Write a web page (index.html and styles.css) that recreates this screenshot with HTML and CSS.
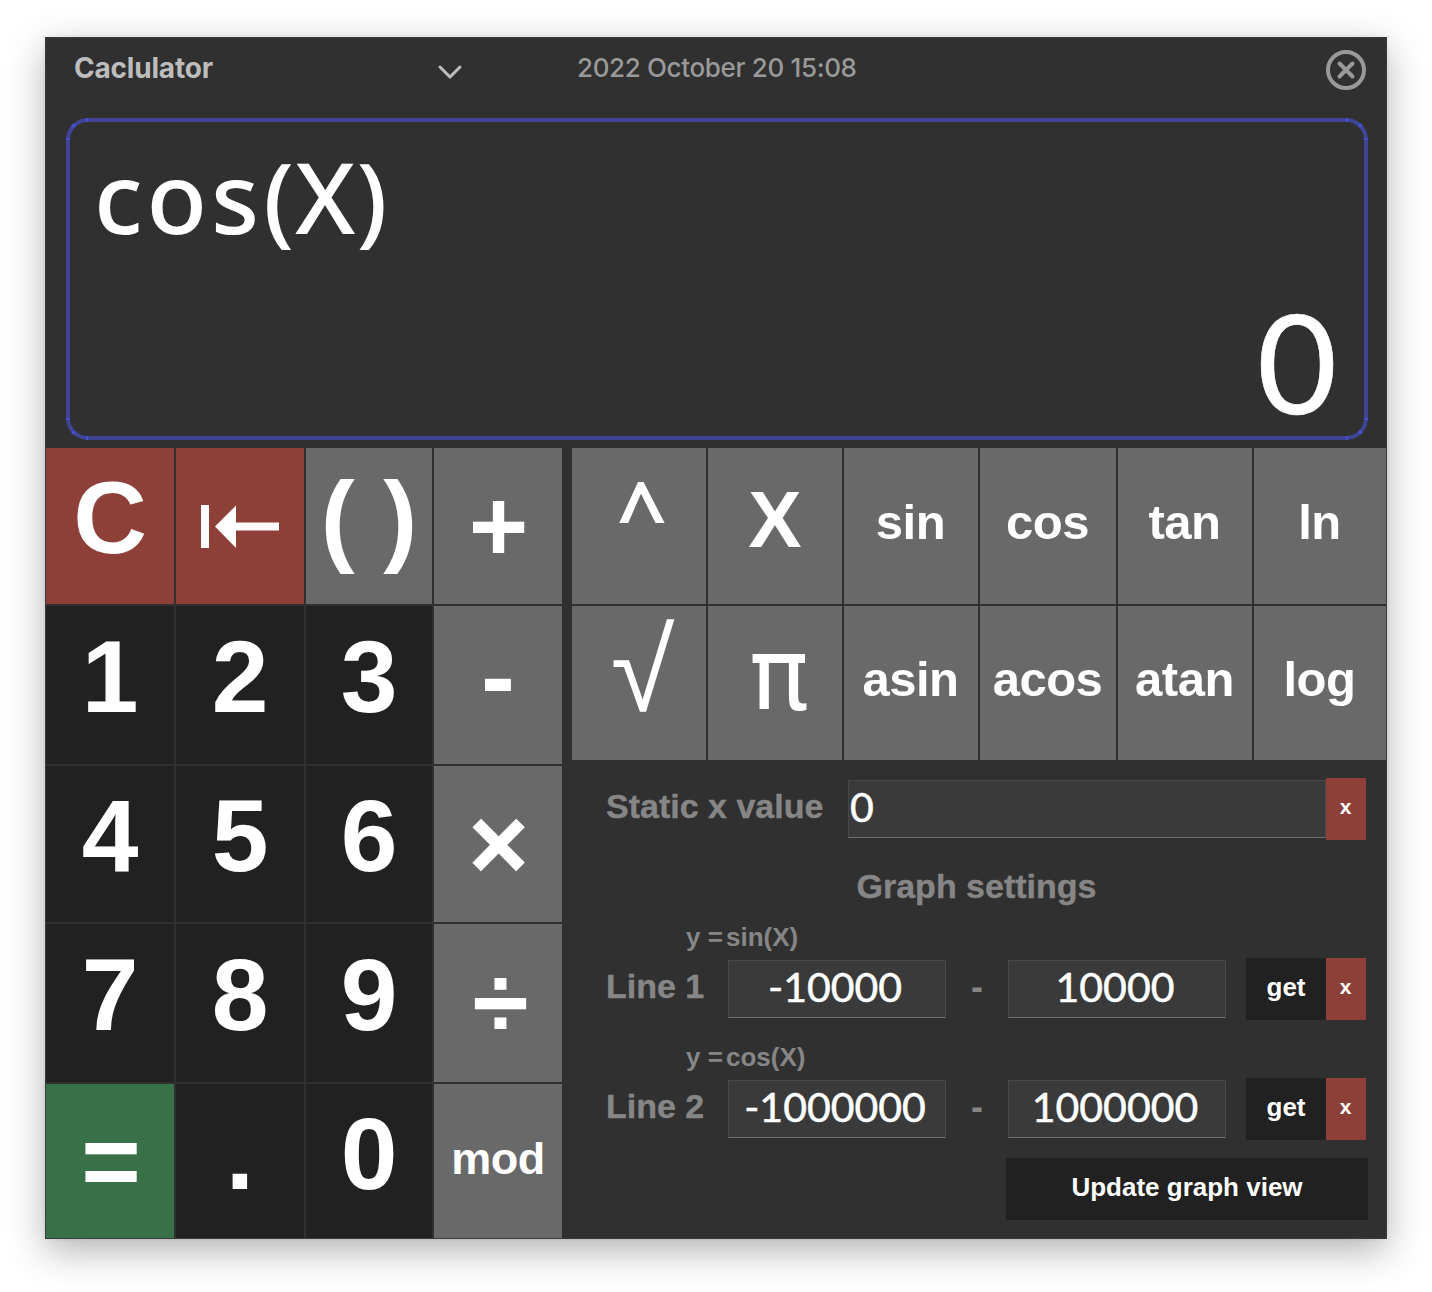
FILE: index.html
```html
<!DOCTYPE html>
<html lang="en">
<head>
<meta charset="utf-8">
<title>Caclulator</title>
<link rel="stylesheet" href="styles.css">
</head>
<body>
<main class="window">
  <header class="titlebar">
    <span class="title">Caclulator</span>
    <svg class="chevron" width="26" height="16" viewBox="0 0 26 16"><path d="M3 3 L13 13 L23 3" fill="none" stroke="#bdbdbd" stroke-width="3" stroke-linecap="round" stroke-linejoin="round"/></svg>
    <span class="date">2022 October 20 15:08</span>
    <svg class="close" width="40" height="40" viewBox="0 0 40 40"><circle cx="20" cy="20" r="18" fill="none" stroke="#999" stroke-width="4"/><path d="M13.5 13.5 L26.5 26.5 M26.5 13.5 L13.5 26.5" stroke="#999" stroke-width="4" stroke-linecap="round"/></svg>
  </header>

  <section class="display">
    <svg class="joints" width="1302" height="322" viewBox="0 0 1302 322" fill="#4450cf">
      <path d="M20 0h2v4h-2z M1280 0h2v4h-2z M20 318h2v4h-2z M1280 318h2v4h-2z M0 20h4v2h-4z M0 300h4v2h-4z M1298 20h4v2h-4z M1298 300h4v2h-4z"/>
      <circle cx="7.5" cy="7.5" r="2"/><circle cx="1294.500" cy="7.5" r="2"/><circle cx="7.5" cy="314.5" r="2"/><circle cx="1294.500" cy="314.500" r="2"/>
    </svg>
    <div class="expression"><span class="name">cos</span>(X)</div>
    <div class="result">0</div>
  </section>

  <div class="body">
    <section class="keypad">
      <button class="key red">C</button>
      <button class="key red icon"><svg width="80" height="44" viewBox="0 0 80 44" fill="#fff"><path d="M1 0h8v43h-8z M15 21.500 L36 0.500 V17.500 H79 V25.500 H36 V43 Z"/></svg></button>
      <button class="key grey">( )</button>
      <button class="key grey operator">+</button>
      <button class="key">1</button><button class="key">2</button><button class="key">3</button>
      <button class="key grey minus">-</button>
      <button class="key">4</button><button class="key">5</button><button class="key">6</button>
      <button class="key grey operator times">×</button>
      <button class="key">7</button><button class="key">8</button><button class="key">9</button>
      <button class="key grey divide">÷</button>
      <button class="key green equals">=</button>
      <button class="key last">.</button>
      <button class="key last">0</button>
      <button class="key grey mod">mod</button>
    </section>

    <div class="side">
      <section class="functions">
        <button class="key grey caret">^</button>
        <button class="key grey var">X</button>
        <button class="key grey fn">sin</button>
        <button class="key grey fn">cos</button>
        <button class="key grey fn">tan</button>
        <button class="key grey fn">ln</button>
        <button class="key grey root">√</button>
        <button class="key grey pi">π</button>
        <button class="key grey fn">asin</button>
        <button class="key grey fn">acos</button>
        <button class="key grey fn">atan</button>
        <button class="key grey fn">log</button>
      </section>

      <section class="settings">
        <div class="row">
          <span class="label wide">Static x value</span>
          <div class="field long">0</div>
          <button class="clear">x</button>
        </div>
        <h2 class="heading">Graph settings</h2>
        <div class="equation"><span class="lhs">y =</span><span>sin(X)</span></div>
        <div class="row">
          <span class="label">Line 1</span>
          <div class="field">-10000</div>
          <span class="dash">-</span>
          <div class="field">10000</div>
          <button class="get">get</button>
          <button class="clear">x</button>
        </div>
        <div class="equation second"><span class="lhs">y =</span><span>cos(X)</span></div>
        <div class="row">
          <span class="label">Line 2</span>
          <div class="field">-1000000</div>
          <span class="dash">-</span>
          <div class="field">1000000</div>
          <button class="get">get</button>
          <button class="clear">x</button>
        </div>
        <button class="update">Update graph view</button>
      </section>
    </div>
  </div>
</main>
</body>
</html>
```
FILE: styles.css
```css
* { box-sizing: border-box; }
body {
  margin: 0;
  padding: 37px 45px;
  background: #fff;
  height: 1292px;
  overflow: hidden;
  font-family: "Liberation Sans", Arial, sans-serif;
}
button {
  border: 0;
  margin: 0;
  padding: 0;
  font-family: inherit;
  font-weight: 700;
  color: #fff;
}
.window {
  width: 1342px;
  height: 1202px;
  border: 1px solid #3c3c3c;
  background: #303030;
  box-shadow: 0 12px 36px rgba(0, 0, 0, .3), 0 0 4px rgba(0, 0, 0, .08);
}
.titlebar {
  display: flex;
  align-items: flex-start;
  height: 80px;
  padding: 12px 20px 0 28px;
  font-family: Inter, sans-serif;
}
.title {
  width: 363px;
  font-size: 28px;
  line-height: 37px;
  font-weight: 700;
  letter-spacing: -0.2px;
  color: #bdbdbd;
}
.chevron { margin-top: 14px; }
.date {
  flex: 1;
  margin-left: 114px;
  font-size: 26px;
  line-height: 36px;
  font-weight: 500;
  letter-spacing: -0.35px;
  color: #999;
}
.display {
  position: relative;
  display: flex;
  flex-direction: column;
  justify-content: space-between;
  width: 1302px;
  height: 322px;
  margin-left: 20px;
  border: 4px solid #3f4594;
  border-radius: 22px;
  color: #fff;
}
.joints { position: absolute; left: -4px; top: -4px; }
.expression {
  padding: 7px 0 0 24px;
  font-family: "Noto Sans", sans-serif;
  font-size: 99px;
  line-height: 134px;
  font-weight: 500;
  letter-spacing: 1px;
}
.name { letter-spacing: 4px; }
.result {
  padding: 0 27px 2px 0;
  font-family: Lato, sans-serif;
  font-size: 138px;
  line-height: 146px;
  text-align: right;
  -webkit-text-stroke: 0.6px #fff;
}
.body { display: flex; gap: 10px; margin-top: 8px; }
.keypad {
  display: grid;
  grid-template-columns: 128px 128px 126px 128px;
  grid-template-rows: 156px 158px 156px 158px 154px;
  gap: 2px;
}
.functions {
  display: grid;
  grid-template-columns: 134px 134px 134px 136px 134px 132px;
  grid-template-rows: 156px 154px;
  gap: 2px;
}
.key {
  display: flex;
  align-items: center;
  justify-content: center;
  min-width: 0;
  padding-bottom: 16px;
  background: #212121;
  font-size: 102px;
  line-height: 116px;
  white-space: pre;
}
.grey { background: #696969; }
.red { background: #8e3f38; }
.green { background: #387148; }
.icon { padding: 2px 0 0; }
.operator { padding: 0 0 0 1px; }
.times { -webkit-text-stroke: 1px #fff; }
.minus { padding-bottom: 18px; }
.divide { padding: 0 0 2px 5px; }
.equals { padding: 1px 0 0 2px; }
.last { padding-bottom: 14px; }
.mod { font-size: 45px; padding-bottom: 5px; letter-spacing: -0.5px; }
.fn { font-size: 49px; padding: 0 1px 9px 0; letter-spacing: -0.5px; }
.var { font-size: 80px; padding-bottom: 13px; }
.caret {
  padding: 0 0 28px 6px;
  font-family: "Noto Sans", sans-serif;
  font-size: 88px;
  font-weight: 600;
}
.root { font-weight: 400; font-size: 116px; padding: 0 0 24px 7px; }
.pi {
  padding: 0 0 14px 8px;
  font-family: "DejaVu Sans", sans-serif;
  font-weight: 400;
  font-size: 100px;
}
.settings {
  display: flex;
  flex-direction: column;
  padding: 18px 20px 0 34px;
  color: #868686;
}
.row { display: flex; align-items: center; height: 62px; }
.label {
  width: 122px;
  padding-bottom: 6px;
  font-size: 34px;
  line-height: 40px;
  font-weight: 700;
  white-space: nowrap;
  -webkit-text-stroke: 0.4px #868686;
}
.label.wide { width: 242px; }
.field {
  width: 218px;
  height: 58px;
  padding-right: 4px;
  border: 1px solid #484848;
  border-bottom-color: #6c6c6c;
  background: #3a3a3a;
  color: #fff;
  font-family: Lato, sans-serif;
  font-size: 41px;
  line-height: 52px;
  text-align: center;
  -webkit-text-stroke: 0.5px #fff;
}
.field.long { width: 478px; padding-left: 1px; text-align: left; }
.dash { width: 62px; text-align: center; font-size: 36px; line-height: 40px; font-weight: 700; padding-bottom: 4px; }
.clear { width: 40px; height: 62px; padding: 0 1px 4px 0; background: #8e3f38; font-size: 21px; }
.get { width: 80px; height: 62px; padding-bottom: 4px; margin-left: 20px; background: #212121; font-size: 26px; }
.heading {
  margin: 26px 19px 16px 0;
  font-size: 34px;
  line-height: 40px;
  text-align: center;
  -webkit-text-stroke: 0.4px #868686;
}
.equation {
  display: flex;
  height: 30px;
  margin-bottom: 6px;
  padding-left: 80px;
  font-size: 26px;
  line-height: 30px;
  font-weight: 700;
}
.equation.second { margin-top: 22px; }
.lhs { width: 40px; white-space: nowrap; }
.update {
  align-self: flex-end;
  width: 362px;
  height: 62px;
  margin: 18px -2px 0 0;
  padding-bottom: 4px;
  background: #212121;
  font-size: 26px;
}
```
